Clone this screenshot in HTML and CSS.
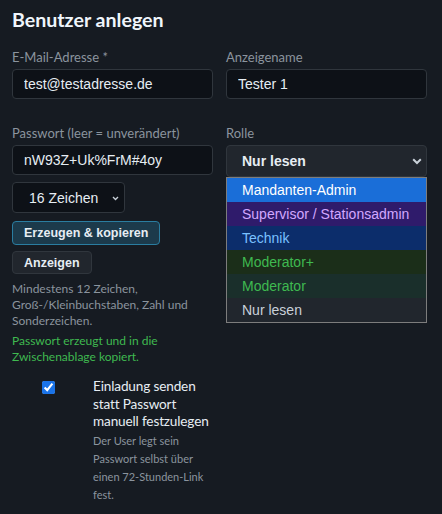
FILE: index.html
```html
<!DOCTYPE html>
<html lang="de">
<head>
<meta charset="utf-8">
<title>Benutzer anlegen</title>
<link rel="stylesheet" href="styles.css">
</head>
<body>
<div class="page">
  <h1 class="title">Benutzer anlegen</h1>
  <div class="form">
    <div class="field">
      <label class="label" for="email">E-Mail-Adresse *</label>
      <input class="input" id="email" type="text" value="test@testadresse.de">
    </div>
    <div class="field">
      <label class="label" for="name">Anzeigename</label>
      <input class="input" id="name" type="text" value="Tester 1">
    </div>
    <div class="field">
      <label class="label" for="pw">Passwort (leer = unverändert)</label>
      <input class="input" id="pw" type="text" value="nW93Z+Uk%FrM#4oy">
      <div class="select-wrap len-wrap">
        <select class="select len-select">
          <option>16 Zeichen</option>
        </select>
        <svg class="chev chev-small" viewBox="0 0 8 6" width="7" height="5"><path d="M1 1.2 L4 4.2 L7 1.2" fill="none" stroke="#c9d1d9" stroke-width="1.6"/></svg>
      </div>
      <button class="btn btn-primary" type="button">Erzeugen &amp; kopieren</button>
      <button class="btn btn-secondary" type="button">Anzeigen</button>
      <p class="hint">Mindestens 12 Zeichen, Groß-/Kleinbuchstaben, Zahl und Sonderzeichen.</p>
      <p class="success">Passwort erzeugt und in die Zwischenablage kopiert.</p>
      <label class="check">
        <input class="checkbox" type="checkbox" checked>
        <span class="check-text">
          <span class="check-main">Einladung senden statt Passwort manuell festzulegen</span>
          <span class="check-sub">Der User legt sein Passwort selbst über einen 72-Stunden-Link fest.</span>
        </span>
      </label>
    </div>
    <div class="field">
      <label class="label" for="role">Rolle</label>
      <div class="select-wrap role-wrap">
        <select class="select role-select" id="role">
          <option>Nur lesen</option>
        </select>
        <svg class="chev chev-big" viewBox="0 0 10 7" width="10" height="7"><path d="M1.2 1.3 L5 5 L8.8 1.3" fill="none" stroke="#c9d1d9" stroke-width="2"/></svg>
        <div class="dropdown" role="listbox">
          <div class="opt opt-selected">Mandanten-Admin</div>
          <div class="opt opt-supervisor">Supervisor / Stationsadmin</div>
          <div class="opt opt-technik">Technik</div>
          <div class="opt opt-modplus">Moderator+</div>
          <div class="opt opt-mod">Moderator</div>
          <div class="opt opt-read">Nur lesen</div>
        </div>
      </div>
    </div>
  </div>
</div>
</body>
</html>
```
FILE: styles.css
```css
* { box-sizing: border-box; }

body {
  margin: 0;
  background: #161b22;
  color: #e6edf3;
  font-family: Lato, "Segoe UI", sans-serif;
}

.page {
  padding: 8px 15px 0 12px;
}

.title {
  margin: 0;
  font-size: 19.6px;
  line-height: 24px;
  font-weight: 700;
  color: #f0f6fc;
}

.form {
  display: grid;
  grid-template-columns: 201px 201px;
  column-gap: 13px;
  row-gap: 25px;
  margin-top: 16px;
}

.field {
  display: flex;
  flex-direction: column;
  align-items: flex-start;
}

.label {
  display: block;
  font-size: 13px;
  line-height: 18px;
  color: #8b949e;
  margin-bottom: 3px;
}

.input {
  width: 100%;
  height: 30px;
  margin: 0;
  padding: 0 11px;
  background: #0d1117;
  border: 1px solid #30363d;
  border-radius: 4px;
  color: #e6edf3;
  font-family: "Liberation Sans", Arial, sans-serif;
  font-size: 14px;
  outline: none;
}

.select-wrap {
  position: relative;
}

.select {
  appearance: none;
  -webkit-appearance: none;
  width: 100%;
  height: 100%;
  margin: 0;
  border: 1px solid #30363d;
  border-radius: 4px;
  color: #e6edf3;
  font-family: "Liberation Sans", Arial, sans-serif;
  font-size: 14px;
  outline: none;
}

.len-wrap {
  width: 113px;
  height: 31px;
  margin-top: 7px;
}

.len-select {
  background: #0d1117;
  padding: 0 0 0 16px;
}

.role-wrap {
  width: 100%;
  height: 32px;
}

.role-select {
  background: #21262d;
  padding: 0 0 0 15px;
  font-weight: 700;
  color: #e6edf3;
}

.chev {
  position: absolute;
  top: 50%;
  pointer-events: none;
}

.chev-small {
  right: 6px;
  margin-top: -2px;
}

.chev-big {
  right: 5px;
  margin-top: -3px;
}

.dropdown {
  position: absolute;
  top: 32px;
  left: 0;
  width: 100%;
  border: 1px solid #7d7d7d;
  background: #21262d;
  font-family: "Liberation Sans", Arial, sans-serif;
  font-size: 14px;
  z-index: 2;
}

.opt {
  height: 24px;
  line-height: 24px;
  padding-left: 15px;
  white-space: nowrap;
}

.opt-selected { background: #1a6ed8; color: #ffffff; }
.opt-supervisor { background: #2f1b6b; color: #d2a8ff; }
.opt-technik { background: #0c2d6b; color: #79c0ff; }
.opt-modplus { background: #1b2e19; color: #3fb950; }
.opt-mod { background: #1a2f2b; color: #3fb950; }
.opt-read { background: #21262d; color: #c9d1d9; }

.btn {
  display: block;
  height: 24px;
  margin: 8px 0 0;
  padding: 0 11px;
  border-radius: 4px;
  font-family: "Liberation Sans", Arial, sans-serif;
  font-size: 12.5px;
  font-weight: 700;
  color: #e6edf3;
  cursor: pointer;
}

.btn-primary {
  background: #1c3a4b;
  border: 1px solid #2a7da0;
}

.btn-secondary {
  margin-top: 6px;
  height: 23px;
  background: #21262d;
  border: 1px solid #30363d;
}

.hint,
.success {
  margin: 0;
  font-size: 12px;
  line-height: 16px;
}

.hint {
  margin-top: 7px;
  color: #8b949e;
}

.success {
  margin-top: 4px;
  color: #3fb950;
}

.check {
  display: flex;
  align-items: flex-start;
  margin-top: 13px;
  width: 100%;
}

.checkbox {
  flex: none;
  width: 13px;
  height: 13px;
  margin: 3px 38px 0 30px;
  accent-color: #1a73e8;
}

.check-text {
  display: flex;
  flex-direction: column;
  flex: 1;
  min-width: 0;
  margin-right: -4px;
}

.check-main {
  font-size: 13.6px;
  line-height: 17.5px;
  letter-spacing: -0.15px;
  color: #e6edf3;
}

.check-sub {
  margin-top: 1px;
  font-size: 11px;
  line-height: 18.3px;
  color: #8b949e;
}
```
